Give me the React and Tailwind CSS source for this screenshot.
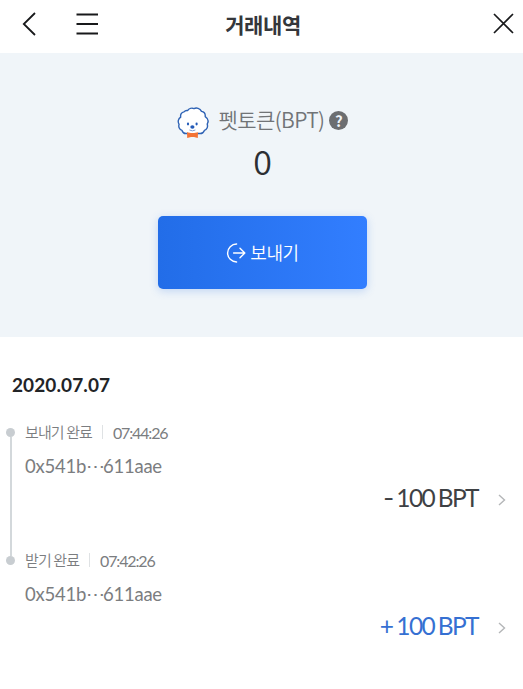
import React from "react";

const transactions = [
  { label: "보내기 완료", time: "07:44:26", address: ["0x541b", "611aae"], sign: "-", amount: "100 BPT" },
  { label: "받기 완료", time: "07:42:26", address: ["0x541b", "611aae"], sign: "+", amount: "100 BPT" },
];

const PuppyLogo = () => (
  <svg width="32" height="32" viewBox="0 0 32 32" className="mt-[2px] shrink-0">
    <path
      d="M10.5 3.6C12 1.3 15 .7 17 1.6C19.5.4 23 1.2 24.5 4.4C27 4.8 28.5 7 28.2 9.6C31 11.5 31.8 14.4 30.2 17C31.2 20 29.8 22.6 27.4 23.4C26.4 25.8 24 27 21.6 26.3C18 28 13.5 28 10.4 26.3C8 27 5.8 25.7 5 23.4C2.4 22.6 1.2 20 2.1 17.3C.5 15 1.2 11.7 3.7 10.2C3.2 7.4 4.5 5.2 7 4.9C7.9 3.8 9 3.4 10.5 3.6Z"
      fill="#fff"
      stroke="#2f63b5"
      strokeWidth="1.4"
      strokeLinejoin="round"
    />
    <ellipse cx="11" cy="17" rx="1.1" ry="1.4" fill="#245bb8" />
    <ellipse cx="19.6" cy="17" rx="1.1" ry="1.4" fill="#245bb8" />
    <ellipse cx="15.4" cy="20" rx="2.1" ry="1.7" fill="#245bb8" />
    <path d="M12.4 23Q15.4 24.7 18.4 23" fill="none" stroke="#7f9fd4" strokeWidth="1" />
    <path d="M10 25.2L14 26.1H17L21 25.2L20.8 31L17 29.9H14L10.2 31Z" fill="#f37335" />
  </svg>
);

const SendIcon = () => (
  <svg width="20" height="20" viewBox="0 0 20 20" fill="none" stroke="#fff" strokeWidth="1.4" className="shrink-0">
    <path d="M10.6 1A9 9 0 0 0 10.6 19" strokeLinecap="round" />
    <path d="M7.6 10H18.6M14 5.2L18.8 10L14 14.8" strokeLinecap="round" strokeLinejoin="round" />
  </svg>
);

const Header = () => (
  <header className="flex h-[53px] items-start justify-between bg-white">
    <div className="flex w-[174px] pl-[22px] pt-3">
      <button aria-label="Back">
        <svg width="14" height="25" viewBox="0 0 14 25" fill="none" stroke="#18191b" strokeWidth="1.8">
          <path d="M13 1L1.8 12L13 23" />
        </svg>
      </button>
      <button aria-label="Menu" className="ml-[40px]">
        <svg width="23" height="25" viewBox="0 0 23 25" stroke="#18191b" strokeWidth="2">
          <path d="M.5 2.5H22M.5 12H22M.5 21.5H22" />
        </svg>
      </button>
    </div>
    <h1 className="mt-2 pl-[3px] text-[21px] leading-[32px] font-bold tracking-[-0.4px] text-[#34373b]">거래내역</h1>
    <div className="flex w-[174px] justify-end pr-[9px] pt-[13px]">
      <button aria-label="Close">
        <svg width="21" height="21" viewBox="0 0 21 21" stroke="#18191b" strokeWidth="1.7">
          <path d="M1 1L20 20M20 1L1 20" />
        </svg>
      </button>
    </div>
  </header>
);

const Balance = () => (
  <section className="flex h-[284px] flex-col items-center bg-[#f0f5f9] pt-[53px] pl-[2px]">
    <div className="flex h-8 items-center">
      <PuppyLogo />
      <span className="ml-[10px] mt-[-6px] text-[21px] leading-[30px] font-[350] tracking-[-0.6px] text-[#717477]">
        펫토큰(BPT)
      </span>
      <span className="mt-[-4px] ml-[5px] flex size-[19px] items-center justify-center rounded-full bg-[#6c6e71] text-[15px] leading-none font-bold text-[#f0f5f9]">
        ?
      </span>
    </div>
    <div className="mt-[3px] h-10 text-[34px] leading-[40px] font-[350] text-[#2c2f33]">0</div>
    <button className="mt-[35px] flex h-[73px] w-[209px] items-center justify-center rounded-[5px] bg-gradient-to-r from-[#226de8] to-[#327eff] text-white shadow-[0_2px_8px_rgba(50,120,230,0.25)]">
      <SendIcon />
      <span className="mt-[-2px] ml-1 text-[18px] leading-[28px] font-[350] tracking-[-0.4px]">보내기</span>
    </button>
  </section>
);

const Transaction = ({ item, last }) => (
  <li className="flex h-[128px]">
    {/* Timeline marker */}
    <div className="flex w-[21px] flex-col items-center">
      <span className="size-[9px] shrink-0 rounded-full bg-[#c8cdd1]" />
      {!last && <span className="w-[2px] flex-1 bg-[#d3d8db]" />}
    </div>
    <div className="mt-[-6px] flex flex-1 flex-col pl-1">
      <div className="flex h-5 items-center text-[15px] leading-5 text-[#7b7d80]">
        <span className="font-[350] tracking-[-0.9px]">{item.label}</span>
        <span className="mr-[10px] ml-[10px] h-[14px] w-px bg-[#dfe2e4]" />
        <span className="mt-px font-[Lato] text-[16px] tracking-[-1.15px]">{item.time}</span>
      </div>
      <div className="mt-3 flex h-6 items-center font-[Lato] text-[18.5px] leading-6 tracking-[-0.25px] text-[#7b7d80]">
        <span>{item.address[0]}</span>
        <span className="w-[17px] text-center tracking-[-1px]">⋯</span>
        <span>{item.address[1]}</span>
      </div>
      <div className="mt-1 flex h-8 items-center justify-end pr-[17px]">
        <span
          className={`flex font-[Lato] text-[24.5px] leading-8 tracking-[-1.6px] ${
            item.sign === "+" ? "text-[#3570d2]" : "text-[#3e4144]"
          }`}
        >
          {item.sign === "+" ? (
            <span className="mr-[4px]">+</span>
          ) : (
            <span className="mr-[4px] inline-block origin-right scale-x-125">-</span>
          )}
          <span className="[word-spacing:-1px]">{item.amount}</span>
        </span>
        <svg width="8" height="12" viewBox="0 0 8 12" fill="none" stroke="#b4b6b8" strokeWidth="1.4" className="ml-5 mt-1">
          <path d="M1 1L6.5 6L1 11" />
        </svg>
      </div>
    </div>
  </li>
);

const App = () => {
  return (
    <main className="min-h-[689px] w-[523px] overflow-hidden bg-white font-['Noto_Sans_CJK_KR',sans-serif]">
      <Header />
      <Balance />
      <section className="pt-[34px]">
        <h2 className="h-7 pl-3 font-[Lato] text-[19px] leading-7 font-bold tracking-[0.1px] text-[#222427]">2020.07.07</h2>
        <ul className="mt-[29px]">
          {transactions.map((item, index) => (
            <Transaction key={item.time} item={item} last={index === transactions.length - 1} />
          ))}
        </ul>
      </section>
    </main>
  );
};

export default App;
